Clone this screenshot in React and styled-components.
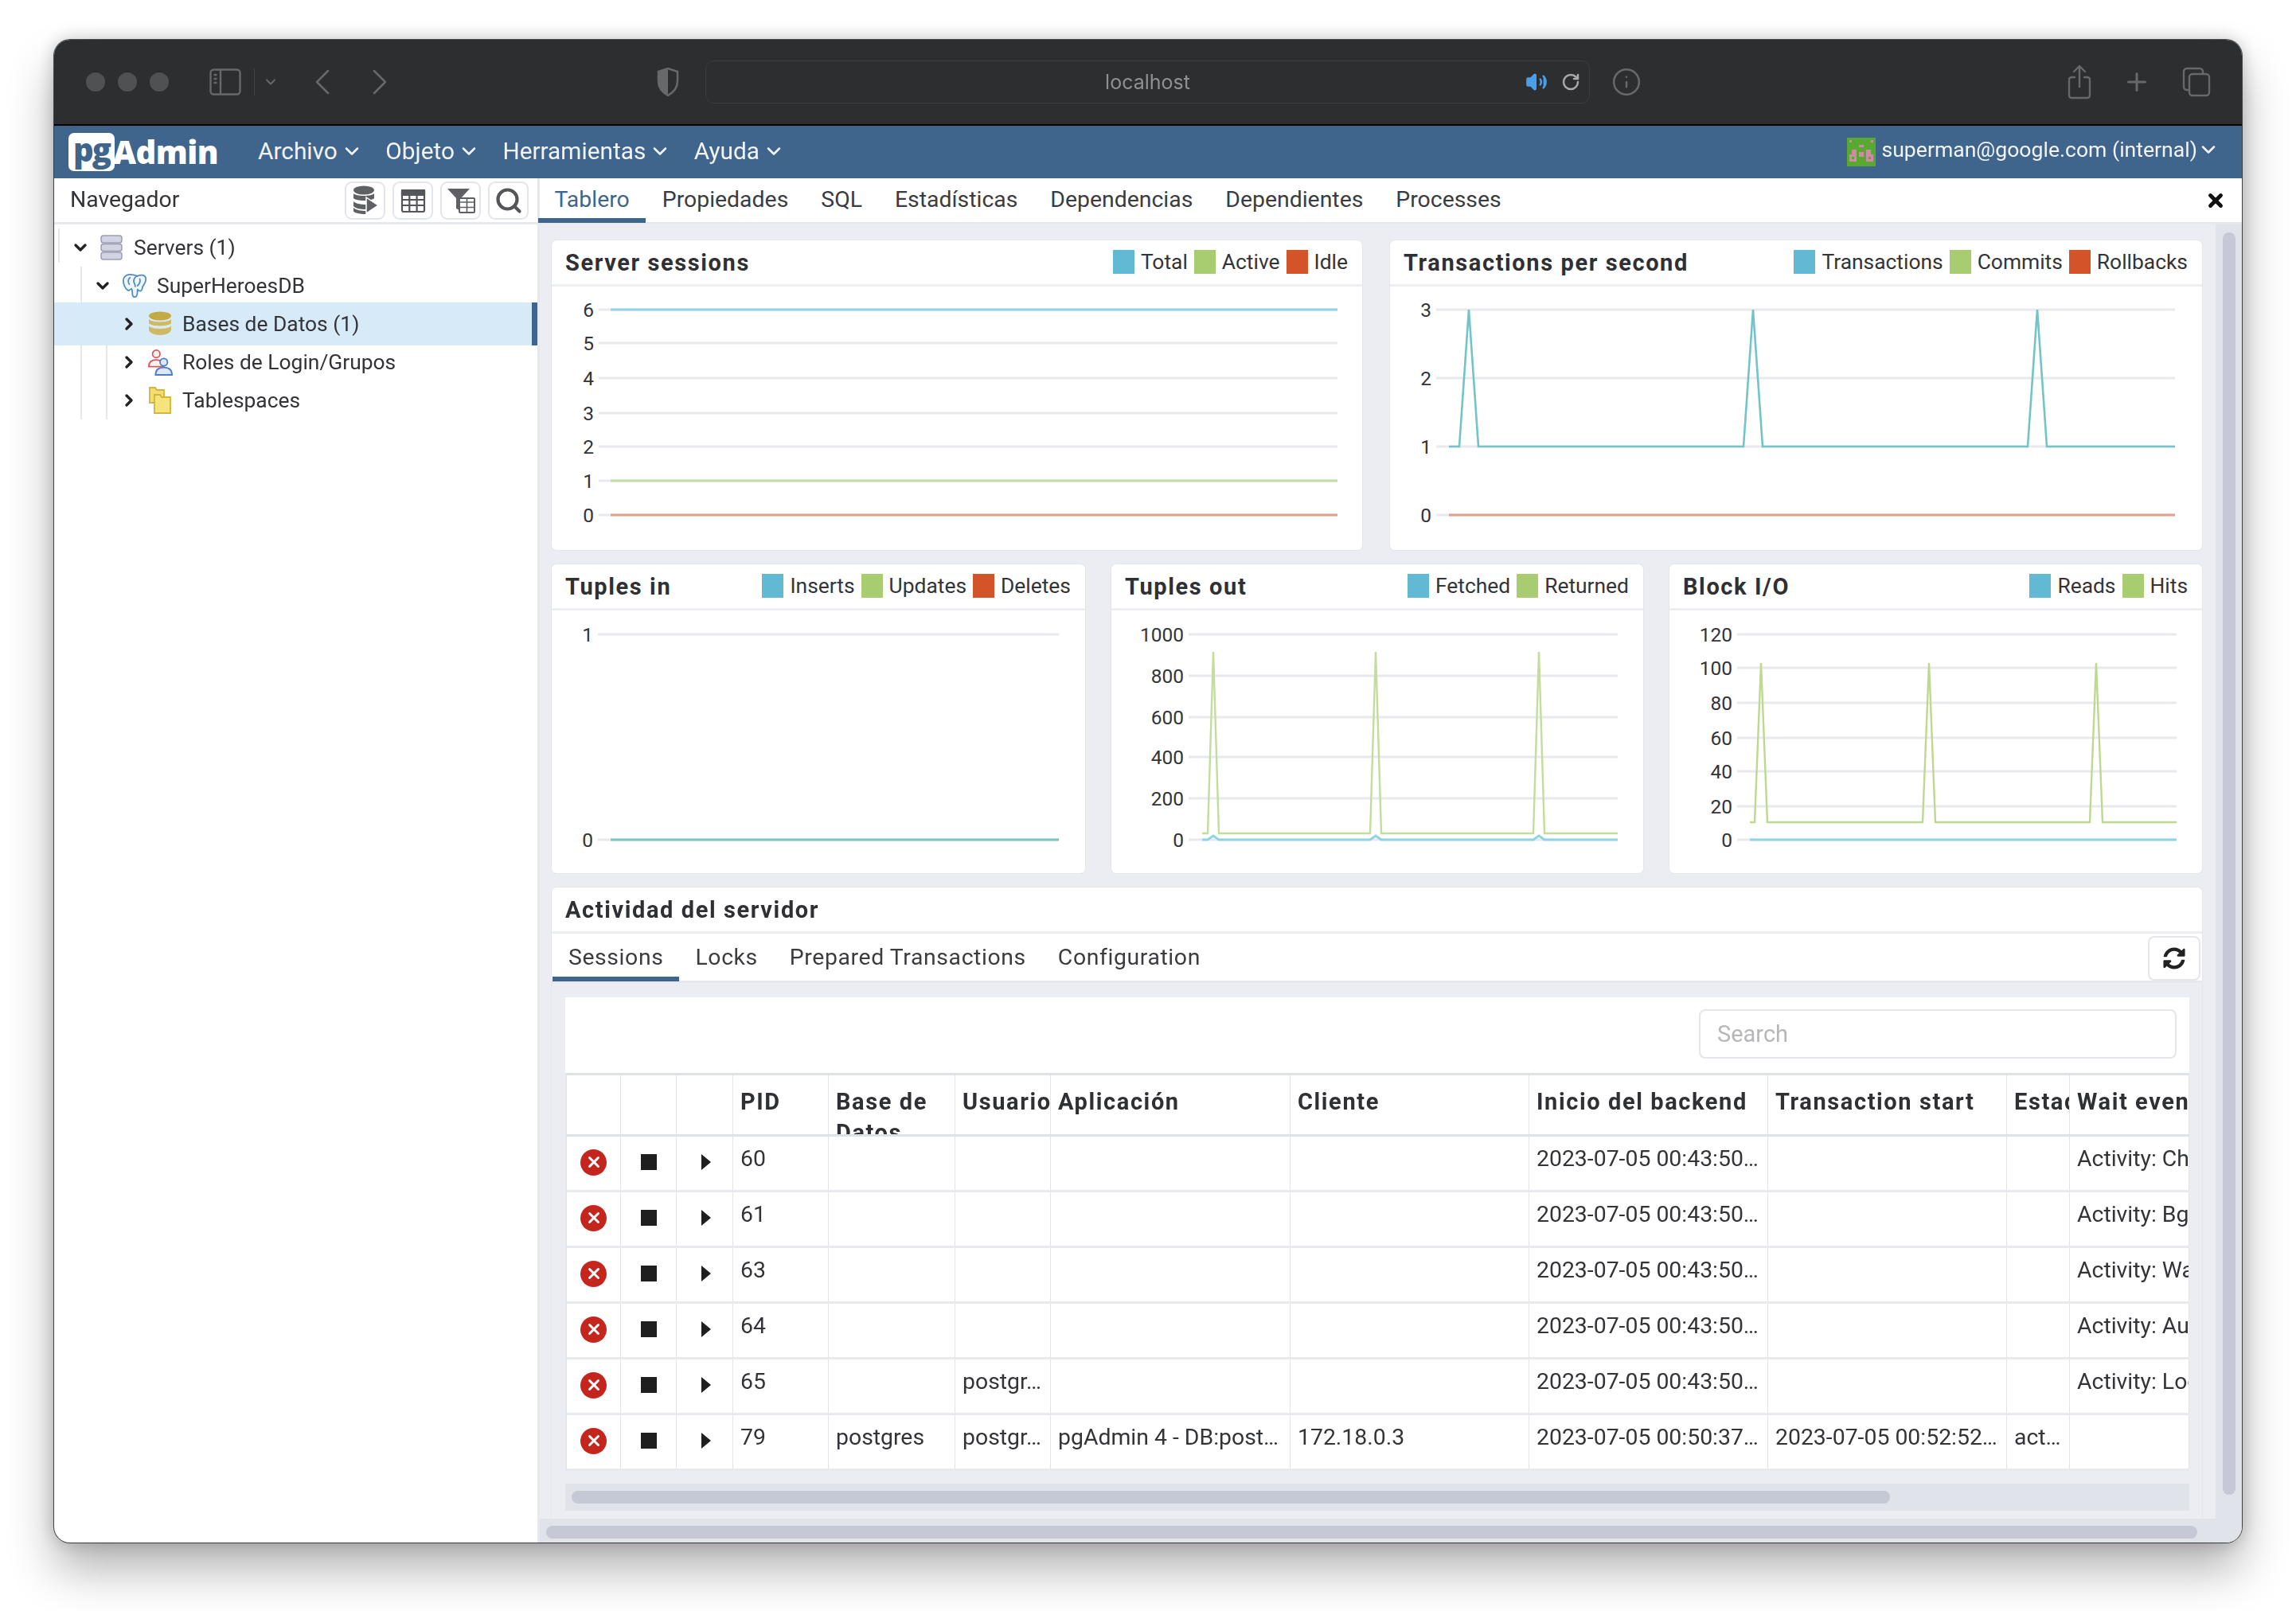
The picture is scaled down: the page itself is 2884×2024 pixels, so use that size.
import { ChevronDown, ChevronRight, ChevronLeft, Plus, Search, X, RotateCw, Volume2, Info } from 'lucide-react'
import { FaSyncAlt } from 'react-icons/fa'
import styled, { createGlobalStyle } from 'styled-components'

const GlobalStyle = createGlobalStyle`
    html, body {
        background: #ffffff;
        margin: 0;
        padding: 0;
    }
    * {
        box-sizing: border-box;
    }
`

const Page = styled.div`
    font-family: Roboto, "Liberation Sans", sans-serif;
    font-size: 28.4px;
    color: #333438;
    padding: 50px 68px 86px;
    width: 2884px;
    height: 2024px;
`

const Window = styled.div`
    background: #ffffff;
    border-radius: 20px;
    box-shadow: 0 34px 58px rgba( 0, 0, 0, 0.3 ), 0 0 22px rgba( 0, 0, 0, 0.22 ), 0 0 0 1px #55565a;
    display: flex;
    filter: blur( 0.6px );
    flex-direction: column;
    height: 1888px;
    overflow: hidden;
`

/* safari chrome */

const TitleBar = styled.div`
    align-items: center;
    background: #2d2e30;
    border-bottom: 2px solid #000000;
    color: #67686b;
    display: flex;
    flex: 0 0 108px;
    padding-left: 40px;
`

const Dots = styled.div`
    display: flex;
    gap: 16px;
`

const Dot = styled.span`
    background: #505153;
    border-radius: 50%;
    height: 24px;
    width: 24px;
`

const ChromeIcons = styled.div`
    align-items: center;
    display: flex;
    margin-left: ${ p => p.$left }px;
    gap: ${ p => p.$gap || 0 }px;
`

const Divider = styled.span`
    background: #414244;
    height: 34px;
    margin: 0 10px 0 16px;
    width: 1px;
`

const AddressBar = styled.div`
    align-items: center;
    border: 1px solid #3b3c3f;
    border-radius: 10px;
    color: #8f9092;
    display: flex;
    font-family: Inter, sans-serif;
    font-size: 25px;
    height: 54px;
    margin-left: 33px;
    padding: 0 11px 0 0;
    position: relative;
    width: 1111px;
    justify-content: flex-end;
    gap: 17px;
`

const AddressText = styled.span`
    left: 0;
    position: absolute;
    right: 0;
    text-align: center;
`

const RightChrome = styled.div`
    align-items: center;
    display: flex;
    gap: 39px;
    margin-left: auto;
    padding-right: 39px;
`

/* pgadmin menu */

const MenuBar = styled.div`
    align-items: center;
    background: #40658d;
    color: #f1f3f6;
    display: flex;
    flex: 0 0 66px;
    padding: 0 28px 0 18px;
`

const Logo = styled.div`
    align-items: center;
    display: flex;
    margin-right: 50px;
`

const LogoBox = styled.span`
    background: #ffffff;
    border-radius: 7px;
    color: #40658d;
    font-family: "Open Sans", sans-serif;
    font-size: 40px;
    font-weight: 800;
    height: 48px;
    letter-spacing: -2px;
    line-height: 42px;
    text-align: center;
    width: 58px;
`

const LogoText = styled.span`
    color: #ffffff;
    font-family: "Open Sans", sans-serif;
    font-size: 40px;
    font-weight: 800;
    letter-spacing: -0.5px;
    line-height: 48px;
    margin-left: -2px;
`

const MenuItem = styled.div`
    align-items: center;
    display: flex;
    font-size: 29.8px;
    gap: 4px;
    margin-right: 28.5px;
    padding-bottom: 3px;
`

const UserMenu = styled.div`
    align-items: center;
    display: flex;
    font-size: 26.6px;
    gap: 0;
    margin-left: auto;
`

const UserName = styled.span`
    margin-left: 7px;
    padding-bottom: 7px;
`

const UserChevron = styled.span`
    align-items: center;
    display: flex;
    padding-bottom: 6px;
`

const Avatar = styled.svg`
    display: block;
    height: 36px;
    width: 37px;
`

/* page body */

const Body = styled.div`
    display: grid;
    flex: 1;
    grid-template-columns: 610px 1fr;
    min-height: 0;
`

const Sidebar = styled.aside`
    border-right: 3px solid #e6e8ee;
    display: flex;
    flex-direction: column;
    min-height: 0;
`

const SidebarHead = styled.div`
    align-items: center;
    border-bottom: 3px solid #e6e8ee;
    display: flex;
    flex: 0 0 58px;
    justify-content: space-between;
    padding: 0 11px 0 20px;
`

const SidebarTitle = styled.span`
    padding-bottom: 3px;
`

const Tools = styled.div`
    display: flex;
    gap: 9px;
`

const ToolButton = styled.button`
    align-items: center;
    background: #ffffff;
    border: 2px solid #e2e5ec;
    border-radius: 9px;
    color: #55565a;
    display: flex;
    height: 48px;
    justify-content: center;
    padding: 0;
    width: 51px;
`

const Tree = styled.div`
    font-size: 26.4px;
    padding-top: 5px;
    position: relative;
`

const TreeRow = styled.div`
    align-items: center;
    background: ${ p => p.$selected ? `#d7eaf7` : `transparent` };
    border-right: ${ p => p.$selected ? `7px solid #40658d` : `0` };
    display: flex;
    height: ${ p => p.$selected ? 54 : 48 }px;
    margin: ${ p => p.$selected ? `-3px 0` : `0` };
    padding-left: ${ p => p.$indent }px;
    position: relative;
`

const Guide = styled.span`
    background: #e6e8ee;
    bottom: ${ p => p.$bottom }px;
    left: ${ p => p.$left }px;
    position: absolute;
    top: ${ p => p.$top }px;
    width: 2px;
`

const TreeIcon = styled.span`
    align-items: center;
    display: flex;
    height: 32px;
    justify-content: center;
    margin: 0 12px 0 ${ p => p.$gap }px;
    width: 32px;
`

const Main = styled.main`
    display: flex;
    flex-direction: column;
    min-height: 0;
    min-width: 0;
`

const TabRow = styled.div`
    align-items: stretch;
    background: #ffffff;
    border-bottom: 3px solid #e6e8ee;
    display: flex;
    flex: 0 0 ${ p => p.$height }px;
    padding-left: 0;
    padding-right: ${ p => p.$right || 0 }px;
`

const Tab = styled.div`
    align-items: center;
    border-bottom: 6px solid ${ p => p.$active ? `#40658d` : `transparent` };
    color: ${ p => p.$active && p.$tinted ? `#40658d` : `#3b3c40` };
    display: flex;
    letter-spacing: ${ p => p.$spaced ? 0.6 : 0 }px;
    margin-bottom: -1px;
    padding: ${ p => p.$spaced ? `4px 20px 0` : `2px 20.5px 0` };

    &:first-child {
        margin-left: ${ p => p.$spaced ? 1 : -2 }px;
    }
`

const CloseButton = styled.span`
    align-items: center;
    color: #111111;
    display: flex;
    margin-left: auto;
`

const Scroller = styled.div`
    display: grid;
    flex: 1;
    grid-template-columns: 1fr 33px;
    grid-template-rows: 1fr 30px;
    min-height: 0;
`

const Content = styled.div`
    background: #ebedf2;
    display: flex;
    flex-direction: column;
    gap: 18px;
    min-height: 0;
    min-width: 0;
    padding: 20px 17px 0 15px;
`

const ChartRow = styled.div`
    display: grid;
    gap: ${ p => p.$gap }px;
    grid-template-columns: ${ p => p.$columns };
`

const Card = styled.section`
    background: #ffffff;
    border-radius: 6px;
    box-shadow: 0 0 0 1px #e4e6ec;
    display: flex;
    flex-direction: column;
    min-width: 0;
`

const CardHead = styled.div`
    align-items: center;
    border-bottom: 3px solid #eceef2;
    display: flex;
    flex: 0 0 58px;
    justify-content: space-between;
    padding: 0 18px 0 17px;
`

const CardTitle = styled.h3`
    font-size: 29px;
    font-weight: 700;
    letter-spacing: 1.6px;
    margin: 0;
    color: #2f3034;
`

const Legend = styled.div`
    display: flex;
    font-size: 26.4px;
    gap: 8px;
    margin-bottom: 2px;
`

const LegendItem = styled.div`
    align-items: center;
    display: flex;
    gap: 8px;
`

const Swatch = styled.span`
    background: ${ p => p.$color };
    height: 30px;
    width: 27px;
`

const ChartSvg = styled.svg`
    display: block;
    font-family: Roboto, sans-serif;
    font-size: 24.5px;
`

const ActivityCard = styled(Card)`
    border-radius: 6px 6px 0 0;
    flex: 1;
    min-height: 0;
`

const RefreshButton = styled.button`
    align-items: center;
    background: #ffffff;
    border: 2px solid #e4e6ec;
    border-radius: 8px;
    color: #222222;
    display: flex;
    height: 56px;
    justify-content: center;
    margin: 3px 2px 0 auto;
    padding: 0;
    width: 66px;
`

const ActivityBody = styled.div`
    background: #ebedf2;
    display: flex;
    flex: 1;
    flex-direction: column;
    min-height: 0;
    padding: 18px 16px 12px 17px;
`

const SearchBar = styled.div`
    align-items: center;
    background: #ffffff;
    border-bottom: 3px solid #dfe1e8;
    display: flex;
    flex: 0 0 98px;
    justify-content: flex-end;
    padding: 0 16px 3px 0;
`

const SearchInput = styled.input`
    border: 2px solid #e4e6ec;
    border-radius: 8px;
    color: #333333;
    font-family: Roboto, sans-serif;
    font-size: 29px;
    height: 62px;
    outline: none;
    padding: 0 21px;
    width: 600px;

    &::placeholder {
        color: #b6b7ba;
    }
`

const TableWrap = styled.div`
    background: #ffffff;
    border-left: 2px solid #e4e6ec;
    flex: 0 0 497px;
    overflow: hidden;
`

const Row = styled.div`
    border-bottom: 3px solid ${ p => p.$head ? `#dfe1e8` : `#e8e9ee` };
    display: grid;
    grid-template-columns: 68px 70px 71px 120px 159px 120px 301px 300px 300px 300px 79px 150px;
    height: ${ p => p.$head ? 77 : 70 }px;
`

const Cell = styled.div`
    border-right: 1px solid #e2e3e9;
    line-height: 39px;
    overflow: hidden;
    padding: 8px 0 0 9px;
    white-space: nowrap;
`

const HeadCell = styled(Cell)`
    color: #2f3034;
    font-size: 29px;
    font-weight: 700;
    letter-spacing: 1.6px;
    padding-top: 14px;
    white-space: ${ p => p.$wrap ? `normal` : `nowrap` };
`

const IconCell = styled(Cell)`
    align-items: center;
    display: flex;
    justify-content: center;
    padding: 0 0 3px ${ p => p.$left || 0 }px;
`

const DeleteDot = styled.span`
    align-items: center;
    background: #c4261d;
    border-radius: 50%;
    color: #ffffff;
    display: flex;
    height: 33px;
    justify-content: center;
    width: 33px;
`

const StopSquare = styled.span`
    background: #1f1f1f;
    height: 20px;
    width: 20px;
`

const Caret = styled.span`
    border-bottom: 10px solid transparent;
    border-left: 12px solid #1f1f1f;
    border-top: 10px solid transparent;
    height: 0;
    width: 0;
`

const HBar = styled.div`
    background: #e0e3ea;
    flex: 0 0 33px;
    margin-top: 16px;
    padding: 9px 8px;
`

const BarThumb = styled.div`
    background: #c5c9d6;
    border-radius: 8px;
    height: 16px;
    width: ${ p => p.$width }px;
`

const VTrack = styled.div`
    background: #e0e3ea;
    grid-row: span 2;
    padding: 10px 8px 0 9px;
`

const VThumb = styled.div`
    background: #c5c9d6;
    border-radius: 8px;
    height: 1586px;
    width: 16px;
`

const BottomTrack = styled.div`
    background: #e0e3ea;
    padding: 9px 8px;
`

/* drawings */

const SidebarIcon = () => <svg width="40" height="34" viewBox="0 0 40 34" fill="none" stroke="currentColor" strokeWidth="2.4">
    <rect x="1.5" y="1.5" width="37" height="31" rx="4" />
    <path d="M14 2v30M5.5 8h4M5.5 13h4M5.5 18h4" />
</svg>

const ShieldIcon = () => <svg width="28" height="36" viewBox="0 0 28 36">
    <path d="M14 1 2 5v12c0 8 5 14 12 18 7-4 12-10 12-18V5z" fill="none" stroke="currentColor" strokeWidth="2.5" />
    <path d="M14 1 2 5v12c0 8 5 14 12 18z" fill="currentColor" />
</svg>

const ShareIcon = () => <svg width="30" height="44" viewBox="0 0 30 44" fill="none" stroke="currentColor" strokeWidth="2.4" strokeLinecap="round" strokeLinejoin="round">
    <path d="M9 16H5a3 3 0 0 0-3 3v20a3 3 0 0 0 3 3h20a3 3 0 0 0 3-3V19a3 3 0 0 0-3-3h-4" />
    <path d="M15 28V2M8 9l7-7 7 7" />
</svg>

const TabsIcon = () => <svg width="36" height="38" viewBox="0 0 36 38" fill="none" stroke="currentColor" strokeWidth="2.4">
    <rect x="9" y="9" width="25" height="27" rx="4" />
    <path d="M9 29H6a4 4 0 0 1-4-4V6a4 4 0 0 1 4-4h16a4 4 0 0 1 4 4v3" />
</svg>

const UserAvatar = () => <Avatar viewBox="0 0 12 12" shapeRendering="crispEdges">
    <rect width="12" height="12" fill="#59a832" />
    <path d="M1 1h1v1H1zM10 1h1v1h-1zM5 3h2v1H5zM2 5h2v2H2zM8 5h2v2H8zM1 7h3v3H1zM8 7h3v3H8zM5 6h2v2H5z" fill="#d08aa8" />
    <path d="M2 8h1v1H2zM9 8h1v1H9z" fill="#59a832" />
</Avatar>

const DbPlayIcon = () => <svg width="34" height="38" viewBox="0 0 34 38" fill="#5f6064">
    <ellipse cx="15" cy="6" rx="13" ry="5.5" />
    <path d="M2 10c3 4 23 4 26 0v6c-3 4-23 4-26 0zM2 20c3 4 16 4 16 4v6c-8 0-13-1-16-4zM2 28c3 3 10 4 16 4v4C9 36 2 34 2 32z" />
    <path d="M18 15 33 25 18 35z" stroke="#fff" strokeWidth="1.5" />
</svg>

const GridIcon = () => <svg width="32" height="32" viewBox="0 0 32 32" fill="none" stroke="#55565a" strokeWidth="2.2">
    <rect x="2" y="3" width="28" height="27" rx="2" />
    <path d="M2 3h28v6H2z" fill="#55565a" />
    <path d="M11.3 3v27M20.6 3v27M2 15h28M2 22h28" />
</svg>

const FilterTableIcon = () => <svg width="36" height="34" viewBox="0 0 36 34">
    <path d="M1 2h28L18 14v16l-6-3V14z" fill="#5f6064" />
    <rect x="16" y="14" width="19" height="18" rx="1" fill="#fff" stroke="#5f6064" strokeWidth="2" />
    <path d="M16 19h19M16 25.5h19M25.5 14v18" stroke="#5f6064" strokeWidth="1.6" />
</svg>

const ServersIcon = () => <svg width="30" height="32" viewBox="0 0 30 32" fill="#d3d4e2" stroke="#9c9db4" strokeWidth="1.5">
    <rect x="2" y="1" width="26" height="9" rx="3" />
    <rect x="2" y="11.5" width="26" height="9" rx="3" />
    <rect x="2" y="22" width="26" height="9" rx="3" />
</svg>

const ElephantIcon = () => <svg width="34" height="34" viewBox="0 0 34 34" fill="#eef5fb" stroke="#4f8cc4" strokeWidth="1.9" strokeLinejoin="round" strokeLinecap="round">
    <path d="M21 4c4-2 10-2 11 3 1 4-2 8-4 11-1 2 0 5-3 6-2 .6-3-1-4-2 0 4 0 9-3 10-3 .7-4-2-4-6 0-2 0-4-1-5-2 1-3 3-5 2C4 21 2 14 2 10 2 5 6 2 11 2c4 0 7 1 10 2z" />
    <path d="M21 4c-3 1-5 4-5 7s2 4 2 7M11 6c-3 2-3 6-1 9M24 8c1 3 0 6-3 9" fill="none" />
</svg>

const DatabaseIcon = () => <svg width="30" height="32" viewBox="0 0 30 32" fill="#c4aa45">
    <ellipse cx="15" cy="6" rx="14" ry="5.5" />
    <path d="M1 10c3 4.5 25 4.5 28 0v5c-3 4.5-25 4.5-28 0zM1 18.5c3 4.5 25 4.5 28 0V23c0 4-7 7-14 7S1 27 1 23z" fill="#cfb962" />
</svg>

const RolesIcon = () => <svg width="34" height="36" viewBox="0 0 34 36" fill="none" strokeWidth="1.9">
    <g stroke="#d9585a" fill="#fdf2f2">
        <circle cx="12" cy="7" r="5" />
        <path d="M2 24c0-6 4-9 10-9s9 3 10 9z" />
    </g>
    <g stroke="#4f7cc8" fill="#dbe7f8">
        <circle cx="22" cy="18" r="5" />
        <path d="M11 35c0-7 4-10 11-10s11 3 11 10z" />
    </g>
</svg>

const FoldersIcon = () => <svg width="30" height="36" viewBox="0 0 30 36" stroke="#d3b53a" strokeWidth="1.8" fill="#f3dc72">
    <path d="M2 2h7l2 3h9v16H2z" />
    <path d="M8 11h7l2 3h11v20H8z" fill="#f7e37c" />
</svg>

const Closed = () => <ChevronRight size={ 24 } strokeWidth={ 3.4 } color="#222" />
const Open = () => <ChevronDown size={ 24 } strokeWidth={ 3.4 } color="#222" />

/* chart data, coordinates are page pixels, the svg viewBox starts where the card body starts */

const SWATCH = { blue: `#62b9d3`, green: `#a8cd70`, red: `#d35429` }
const TEAL = `#72c4c8`

function spikes( peaks, half, base, top, x0, x1 ) {
    const points = [ [ x0, base ] ]
    peaks.forEach( x => {
        points.push( [ x - half, base ], [ x, top ], [ x + half, base ] )
    } )
    points.push( [ x1, base ] )
    return points.map( p => p.join( `,` ) ).join( ` ` )
}

const CHARTS = {
    sessions: {
        title: `Server sessions`,
        legend: [ [ `Total`, SWATCH.blue ], [ `Active`, SWATCH.green ], [ `Idle`, SWATCH.red ] ],
        box: [ 693, 360, 1018, 331 ],
        label_x: 746, grid: [ 752, 1680 ],
        ticks: [ [ `6`, 389 ], [ `5`, 431 ], [ `4`, 475 ], [ `3`, 519 ], [ `2`, 561 ], [ `1`, 604 ], [ `0`, 647 ] ],
        lines: [
            { points: `767,389 1680,389`, color: `#8fd4e4`, width: 3 },
            { points: `767,604 1680,604`, color: `#c4dea5`, width: 3 },
            { points: `767,647 1680,647`, color: `#e6a08a`, width: 3 },
        ],
    },
    transactions: {
        title: `Transactions per second`,
        legend: [ [ `Transactions`, SWATCH.blue ], [ `Commits`, SWATCH.green ], [ `Rollbacks`, SWATCH.red ] ],
        box: [ 1746, 360, 1020, 331 ],
        label_x: 1798, grid: [ 1804, 2732 ],
        ticks: [ [ `3`, 389 ], [ `2`, 475 ], [ `1`, 561 ], [ `0`, 647 ] ],
        lines: [
            { points: spikes( [ 1845, 2202, 2559 ], 12, 561, 389, 1820, 2732 ), color: TEAL, width: 2.6 },
            { points: `1820,647 2732,647`, color: `#e6a08a`, width: 3 },
        ],
    },
    tuples_in: {
        title: `Tuples in`,
        legend: [ [ `Inserts`, SWATCH.blue ], [ `Updates`, SWATCH.green ], [ `Deletes`, SWATCH.red ] ],
        box: [ 693, 767, 670, 330 ],
        label_x: 745, grid: [ 751, 1330 ],
        ticks: [ [ `1`, 797 ], [ `0`, 1055 ] ],
        lines: [ { points: `767,1055 1330,1055`, color: `#7cc3bc`, width: 3 } ],
    },
    tuples_out: {
        title: `Tuples out`,
        legend: [ [ `Fetched`, SWATCH.blue ], [ `Returned`, SWATCH.green ] ],
        box: [ 1396, 767, 668, 330 ],
        label_x: 1487, grid: [ 1493, 2032 ],
        ticks: [ [ `1000`, 797 ], [ `800`, 849 ], [ `600`, 901 ], [ `400`, 951 ], [ `200`, 1003 ], [ `0`, 1055 ] ],
        lines: [
            { points: spikes( [ 1524, 1728, 1933 ], 7, 1047, 819, 1510, 2032 ), color: `#c2dd9c`, width: 2.4 },
            { points: spikes( [ 1524, 1728, 1933 ], 7, 1055, 1050, 1510, 2032 ), color: `#8fd4e4`, width: 3 },
        ],
    },
    block_io: {
        title: `Block I/O`,
        legend: [ [ `Reads`, SWATCH.blue ], [ `Hits`, SWATCH.green ] ],
        box: [ 2097, 767, 669, 330 ],
        label_x: 2176, grid: [ 2182, 2734 ],
        ticks: [ [ `120`, 797 ], [ `100`, 839 ], [ `80`, 883 ], [ `60`, 927 ], [ `40`, 969 ], [ `20`, 1013 ], [ `0`, 1055 ] ],
        lines: [
            { points: spikes( [ 2212, 2423, 2633 ], 8, 1033, 833, 2198, 2734 ), color: `#bcd98f`, width: 2.4 },
            { points: `2198,1055 2734,1055`, color: `#8fd4e4`, width: 3 },
        ],
    },
}

function Chart( { chart } ) {

    const [ x, y, w, h ] = chart.box

    return <Card>
        <CardHead>
            <CardTitle>{ chart.title }</CardTitle>
            <Legend>
                { chart.legend.map( ( [ label, color ] ) => <LegendItem key={ label }>
                    <Swatch $color={ color } />
                    { label }
                </LegendItem> ) }
            </Legend>
        </CardHead>
        <ChartSvg width={ w } height={ h } viewBox={ `${ x } ${ y } ${ w } ${ h }` }>
            { chart.ticks.map( ( [ label, tick_y ] ) => <g key={ label }>
                <line x1={ chart.grid[ 0 ] } x2={ chart.grid[ 1 ] } y1={ tick_y } y2={ tick_y } stroke="#e8e9ee" strokeWidth="3" />
                <text x={ chart.label_x } y={ tick_y + 9 } textAnchor="end" fill="#333438">{ label }</text>
            </g> ) }
            { chart.lines.map( ( line, index ) => <polyline key={ index } points={ line.points } fill="none" stroke={ line.color } strokeWidth={ line.width } /> ) }
        </ChartSvg>
    </Card>

}

/* table data */

const HEADERS = [ ``, ``, ``, `PID`, `Base de Datos`, `Usuario`, `Aplicación`, `Cliente`, `Inicio del backend`, `Transaction start`, `Estado`, `Wait event` ]

const ROWS = [
    [ `60`, ``, ``, ``, ``, `2023-07-05 00:43:50…`, ``, ``, `Activity: CheckpointerMain` ],
    [ `61`, ``, ``, ``, ``, `2023-07-05 00:43:50…`, ``, ``, `Activity: BgWriterMain` ],
    [ `63`, ``, ``, ``, ``, `2023-07-05 00:43:50…`, ``, ``, `Activity: WalWriterMain` ],
    [ `64`, ``, ``, ``, ``, `2023-07-05 00:43:50…`, ``, ``, `Activity: AutoVacuumMain` ],
    [ `65`, ``, `postgr…`, ``, ``, `2023-07-05 00:43:50…`, ``, ``, `Activity: LogicalLauncherMain` ],
    [ `79`, `postgres`, `postgr…`, `pgAdmin 4 - DB:post…`, `172.18.0.3`, `2023-07-05 00:50:37…`, `2023-07-05 00:52:52…`, `act…`, `` ],
]

const MENU = [ `Archivo`, `Objeto`, `Herramientas`, `Ayuda` ]
const MAIN_TABS = [ `Tablero`, `Propiedades`, `SQL`, `Estadísticas`, `Dependencias`, `Dependientes`, `Processes` ]
const ACTIVITY_TABS = [ `Sessions`, `Locks`, `Prepared Transactions`, `Configuration` ]

export default function App() {

    return <Page>
        <GlobalStyle />
        <Window>

            <TitleBar>
                <Dots><Dot /><Dot /><Dot /></Dots>
                <ChromeIcons $left={ 51 }>
                    <SidebarIcon />
                    <Divider />
                    <ChevronDown size={ 20 } strokeWidth={ 2.5 } />
                </ChromeIcons>
                <ChromeIcons $left={ 27 } $gap={ 16 }>
                    <ChevronLeft size={ 56 } strokeWidth={ 1.1 } />
                    <ChevronRight size={ 56 } strokeWidth={ 1.1 } />
                </ChromeIcons>
                <ChromeIcons $left={ 320 }><ShieldIcon /></ChromeIcons>
                <AddressBar>
                    <AddressText>localhost</AddressText>
                    <Volume2 size={ 28 } color="#4a9eea" fill="#4a9eea" />
                    <RotateCw size={ 24 } color="#a8a9ab" strokeWidth={ 2.5 } />
                </AddressBar>
                <ChromeIcons $left={ 27 }><Info size={ 38 } strokeWidth={ 1.6 } /></ChromeIcons>
                <RightChrome>
                    <ShareIcon />
                    <Plus size={ 36 } strokeWidth={ 2 } />
                    <TabsIcon />
                </RightChrome>
            </TitleBar>

            <MenuBar>
                <Logo>
                    <LogoBox>pg</LogoBox>
                    <LogoText>Admin</LogoText>
                </Logo>
                { MENU.map( item => <MenuItem key={ item }>
                    { item }
                    <ChevronDown size={ 28 } strokeWidth={ 2.2 } />
                </MenuItem> ) }
                <UserMenu>
                    <UserAvatar />
                    <UserName>superman@google.com (internal)</UserName>
                    <UserChevron><ChevronDown size={ 28 } strokeWidth={ 2.2 } /></UserChevron>
                </UserMenu>
            </MenuBar>

            <Body>

                <Sidebar>
                    <SidebarHead>
                        <SidebarTitle>Navegador</SidebarTitle>
                        <Tools>
                            <ToolButton><DbPlayIcon /></ToolButton>
                            <ToolButton><GridIcon /></ToolButton>
                            <ToolButton><FilterTableIcon /></ToolButton>
                            <ToolButton><Search size={ 36 } strokeWidth={ 2.8 } /></ToolButton>
                        </Tools>
                    </SidebarHead>
                    <Tree>
                        <Guide $left={ 5 } $top={ 5 } $bottom={ 197 } />
                        <Guide $left={ 33 } $top={ 53 } $bottom={ 0 } />
                        <Guide $left={ 65 } $top={ 100 } $bottom={ 0 } />
                        <TreeRow $indent={ 21 }><Open /><TreeIcon $gap={ 11 }><ServersIcon /></TreeIcon>Servers (1)</TreeRow>
                        <TreeRow $indent={ 49 }><Open /><TreeIcon $gap={ 12 }><ElephantIcon /></TreeIcon>SuperHeroesDB</TreeRow>
                        <TreeRow $indent={ 82 } $selected><Closed /><TreeIcon $gap={ 11 }><DatabaseIcon /></TreeIcon>Bases de Datos (1)</TreeRow>
                        <TreeRow $indent={ 82 }><Closed /><TreeIcon $gap={ 11 }><RolesIcon /></TreeIcon>Roles de Login/Grupos</TreeRow>
                        <TreeRow $indent={ 82 }><Closed /><TreeIcon $gap={ 11 }><FoldersIcon /></TreeIcon>Tablespaces</TreeRow>
                    </Tree>
                </Sidebar>

                <Main>
                    <TabRow $height={ 58 } $right={ 20 }>
                        { MAIN_TABS.map( ( tab, index ) => <Tab key={ tab } $active={ index === 0 } $tinted>{ tab }</Tab> ) }
                        <CloseButton><X size={ 26 } strokeWidth={ 4.5 } /></CloseButton>
                    </TabRow>
                    <Scroller>
                        <Content>
                            <ChartRow $columns="1018px 1020px" $gap={ 35 }>
                                <Chart chart={ CHARTS.sessions } />
                                <Chart chart={ CHARTS.transactions } />
                            </ChartRow>
                            <ChartRow $columns="670px 668px 669px" $gap={ 33 }>
                                <Chart chart={ CHARTS.tuples_in } />
                                <Chart chart={ CHARTS.tuples_out } />
                                <Chart chart={ CHARTS.block_io } />
                            </ChartRow>
                            <ActivityCard>
                                <CardHead><CardTitle>Actividad del servidor</CardTitle></CardHead>
                                <TabRow $height={ 61 }>
                                    { ACTIVITY_TABS.map( ( tab, index ) => <Tab key={ tab } $active={ index === 0 } $spaced>{ tab }</Tab> ) }
                                    <RefreshButton><FaSyncAlt size={ 28 } /></RefreshButton>
                                </TabRow>
                                <ActivityBody>
                                    <SearchBar><SearchInput placeholder="Search" /></SearchBar>
                                    <TableWrap>
                                        <Row $head>
                                            { HEADERS.map( ( title, index ) => <HeadCell key={ index } $wrap={ index === 4 }>{ title }</HeadCell> ) }
                                        </Row>
                                        { ROWS.map( row => <Row key={ row[ 0 ] }>
                                            <IconCell><DeleteDot><X size={ 22 } strokeWidth={ 3.2 } /></DeleteDot></IconCell>
                                            <IconCell><StopSquare /></IconCell>
                                            <IconCell $left={ 3 }><Caret /></IconCell>
                                            { row.map( ( value, index ) => <Cell key={ index }>{ value }</Cell> ) }
                                        </Row> ) }
                                    </TableWrap>
                                    <HBar><BarThumb $width={ 1656 } /></HBar>
                                </ActivityBody>
                            </ActivityCard>
                        </Content>
                        <VTrack><VThumb /></VTrack>
                        <BottomTrack><BarThumb $width={ 2074 } /></BottomTrack>
                    </Scroller>
                </Main>

            </Body>
        </Window>
    </Page>

}
